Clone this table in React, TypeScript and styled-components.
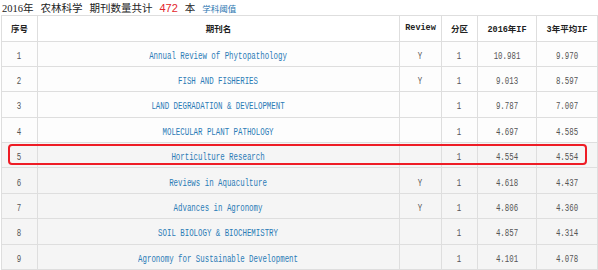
import styled, { createGlobalStyle } from "styled-components";

const Global = createGlobalStyle`
  body {
    margin: 0;
    background: #fff;
    font-family: "Liberation Serif", "Noto Sans CJK SC", serif;
  }
`;

const Page = styled.div`
  width: 598px;
  height: 270px;
  overflow: hidden;
  position: relative;
`;

const Title = styled.div`
  height: 15px;
  display: flex;
  align-items: center;
  gap: 7px;
  padding-left: 2px;
  font-size: 10.5px;
  color: #222;
  white-space: nowrap;
`;

const Count = styled.span`
  color: #e3262b;
  font-family: "Liberation Sans", sans-serif;
  font-size: 11px;
`;

const Threshold = styled.a`
  color: #2b76b0;
  font-size: 8.5px;
  text-decoration: none;
`;

const Table = styled.table`
  border-collapse: collapse;
  margin-left: 1px;
  width: 596px;
  max-width: 596px;
  table-layout: fixed;
`;

const Col = styled.col<{ $w: number }>`
  width: ${(p) => p.$w}px;
`;

const Th = styled.th`
  height: 24.5px;
  padding: 0;
  border: 1px solid #dedede;
  font-family: "Liberation Mono", "Noto Sans CJK SC", monospace;
  font-size: 8.5px;
  font-weight: bold;
  color: #222;
  text-align: center;
  white-space: nowrap;
  overflow: hidden;
`;

const Row = styled.tr<{ $shaded?: boolean }>`
  height: 25.4px;
  background: ${(p) => (p.$shaded ? "#f5f5f5" : "#fdfdfd")};
`;

const Td = styled.td`
  padding: 0;
  border: 1px solid #dedede;
  text-align: center;
  color: #555;
  white-space: nowrap;
  overflow: hidden;
`;

const Mono = styled.span<{ $link?: boolean }>`
  display: inline-block;
  font-family: "Liberation Mono", monospace;
  font-size: 10px;
  transform: scaleX(0.74);
  color: ${(p) => (p.$link ? "#2b7bb6" : "#555")};
`;

const Highlight = styled.div`
  position: absolute;
  left: 8px;
  top: 144px;
  width: 575px;
  height: 17px;
  border: 2px solid #ee1c25;
  border-radius: 4px;
  pointer-events: none;
`;

const widths = [36, 362, 42, 36, 59, 61];

const rows = [
  ["Annual Review of Phytopathology", "Y", "10.981", "9.970"],
  ["FISH AND FISHERIES", "Y", "9.013", "8.597"],
  ["LAND DEGRADATION & DEVELOPMENT", "", "9.787", "7.007"],
  ["MOLECULAR PLANT PATHOLOGY", "", "4.697", "4.585"],
  ["Horticulture Research", "", "4.554", "4.554"],
  ["Reviews in Aquaculture", "Y", "4.618", "4.437"],
  ["Advances in Agronomy", "Y", "4.806", "4.360"],
  ["SOIL BIOLOGY & BIOCHEMISTRY", "", "4.857", "4.314"],
  ["Agronomy for Sustainable Development", "", "4.101", "4.078"],
];

export default function App() {
  return (
    <Page>
      <Global />
      <Title>
        <span>2016年</span>
        <span>农林科学</span>
        <span>期刊数量共计</span>
        <Count>472</Count>
        <span>本</span>
        <Threshold href="#">学科阈值</Threshold>
      </Title>
      <Table>
        <colgroup>
          {widths.map((w, i) => (
            <Col key={i} $w={w} />
          ))}
        </colgroup>
        <thead>
          <tr>
            <Th>序号</Th>
            <Th>期刊名</Th>
            <Th>Review</Th>
            <Th>分区</Th>
            <Th>2016年IF</Th>
            <Th>3年平均IF</Th>
          </tr>
        </thead>
        <tbody>
          {rows.map((r, i) => (
            <Row key={i} $shaded={i >= 4}>
              <Td>
                <Mono>{i + 1}</Mono>
              </Td>
              <Td>
                <Mono $link>{r[0]}</Mono>
              </Td>
              <Td>
                <Mono>{r[1]}</Mono>
              </Td>
              <Td>
                <Mono>1</Mono>
              </Td>
              <Td>
                <Mono>{r[2]}</Mono>
              </Td>
              <Td>
                <Mono>{r[3]}</Mono>
              </Td>
            </Row>
          ))}
        </tbody>
      </Table>
      <Highlight />
    </Page>
  );
}
